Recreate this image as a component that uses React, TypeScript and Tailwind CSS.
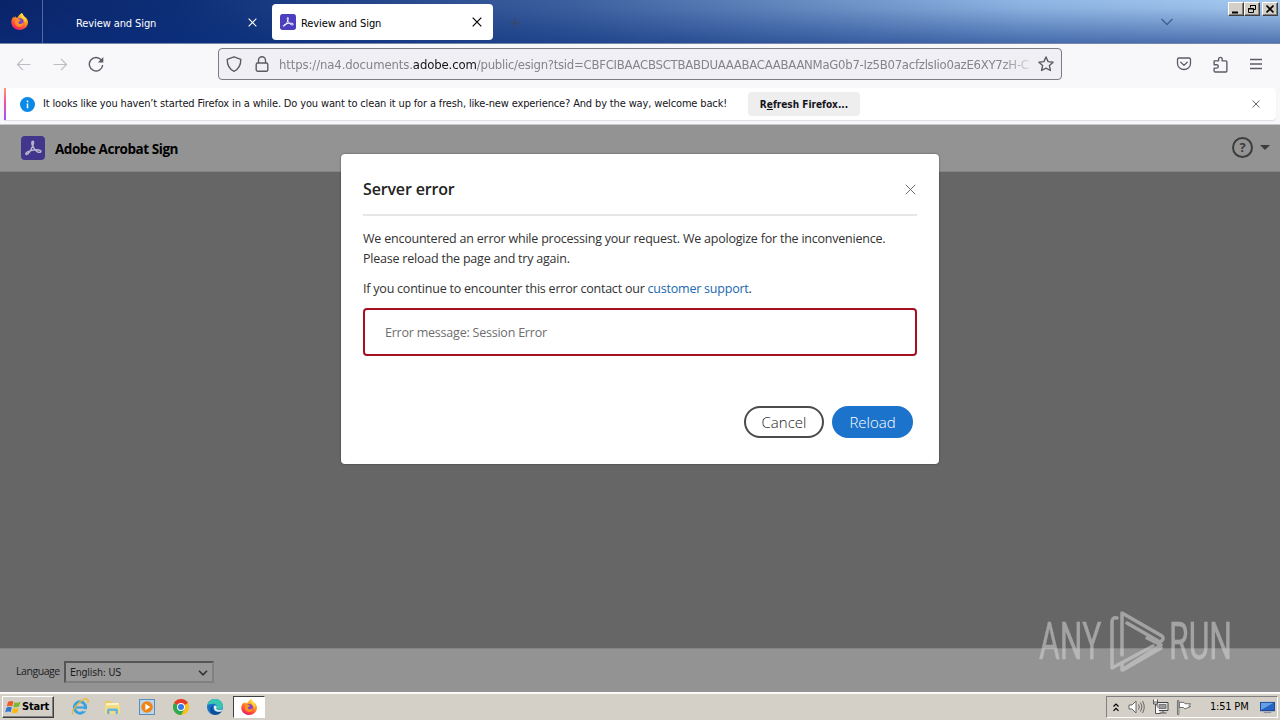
import React from "react";

const ui = "font-['DejaVu_Sans_Condensed','DejaVu_Sans',sans-serif] [font-stretch:condensed]";
const clean = "font-['Open_Sans','Noto_Sans',sans-serif]";

function Firefox({ className = "" }: { className?: string }) {
  return (
    <svg viewBox="0 0 16 16" className={className}>
      <defs>
        <linearGradient id="fxBody" x1="0.8" y1="0" x2="0.3" y2="1">
          <stop offset="0" stopColor="#ffe23c" />
          <stop offset=".4" stopColor="#ff9a1f" />
          <stop offset=".75" stopColor="#ff4a3d" />
          <stop offset="1" stopColor="#e61f6c" />
        </linearGradient>
      </defs>
      <path d="M10 0c1.2 1 1.5 2 1.9 2.8C14.500 4 16 6.300 16 8.800 16 12.800 12.500 16 8.200 16S.3 12.900.3 8.700C.3 6.600 1.200 4.800 2.300 3.400l.4 1.300L4.200 3l.5 1.500L6.500 4C7.500 1.500 9 1 10 0z" fill="url(#fxBody)" />
      <circle cx="8.300" cy="8.400" r="3.500" fill="#7a45c8" />
      <path d="M5 4.800c1 .2 1.900.6 2.600 1.200.8.200 1.500.5 1.500.8 0 .7-1.500.8-2 1.600-.5 1.200.6 2.100 2 1.900 1.300-.1 2-.9 2.200-1.600.8 2.400-1 4.300-3.200 4.300-2.700 0-4.500-2-4.300-4.400.1-1.500.6-2.400 1.200-3.800z" fill="#ff9026" />
      <path d="M10 0c1.200 1 1.500 2 1.900 2.800C14 5 14.600 7 13.700 9.500c-.2-2.400-1.500-3.700-3-4.800C9.600 3.600 9 2 10 0z" fill="#ffdc3d" />
    </svg>
  );
}

function Acrobat({ className = "", bg, fg }: { className?: string; bg: string; fg: string }) {
  return (
    <svg viewBox="0 0 24 24" className={className}>
      <rect width="24" height="24" rx="4" fill={bg} />
      <path
        d="M11.800 5.200c-1.300 0-1.200 2.400-.2 4.600 1 2.400 2.800 4.800 4.800 6 1.800 1 3.700.6 3.600-.6-.1-1.400-3.700-1.700-7-1.200-3.100.5-7.600 1.900-8.100 3.500-.3 1 .9 1.300 2 .3 1.800-1.500 3.600-4.700 4.700-7.600.8-2.300 1.500-5 .2-5z"
        fill="none"
        stroke={fg}
        strokeWidth="1.500"
        strokeLinejoin="round"
      />
    </svg>
  );
}

function Cross({ className = "", w = 1.2 }: { className?: string; w?: number }) {
  return (
    <svg viewBox="0 0 10 10" className={className} fill="none" stroke="currentColor" strokeWidth={w}>
      <path d="M.7.7l8.600 8.600M9.300.7L.7 9.300" />
    </svg>
  );
}

function WinButton({ children }: { children: React.ReactNode }) {
  return (
    <div className="flex h-[14px] w-4 items-center justify-center border border-t-white border-r-[#404040] border-b-[#404040] border-l-white bg-[#d4d0c8] shadow-[inset_-1px_-1px_0_#808080]">
      {children}
    </div>
  );
}

function TabStrip() {
  return (
    <div className="relative flex h-11 shrink-0 border-b border-[#7687a8] bg-[linear-gradient(to_bottom,transparent_0%,rgba(10,36,106,0.05)_20%,rgba(10,45,125,0.55)_100%),linear-gradient(to_right,#0a246a_0%,#0d2f78_14%,#3d619f_45%,#8fb6e4_80%,#a6caf0_100%)]">
      <div className="flex w-[43px] shrink-0 border-r border-[#52699f] pt-[13px] pl-[11px]">
        <Firefox className="h-[17px] w-[17px]" />
      </div>
      <div className={`flex w-[229px] items-center pt-px pl-[33px] pr-[15px] text-[11px] text-white ${ui}`}>
        <span className="flex-1 pt-[4px] whitespace-nowrap tracking-[-0.1px]">Review and Sign</span>
        <Cross className="h-[9px] w-[9px]" />
      </div>
      <div className={`mt-1 flex h-9 w-[221px] items-center rounded-[4px] bg-white pl-2 pr-[11px] text-[11px] text-black ${ui}`}>
        <Acrobat className="h-4 w-4" bg="#4b3fc0" fg="#fff" />
        <span className="ml-[5px] flex-1 pt-[4px] whitespace-nowrap tracking-[-0.1px]">Review and Sign</span>
        <Cross className="h-[10px] w-[10px]" w={1.2} />
      </div>
      <svg viewBox="0 0 10 10" className="mt-[18px] ml-[17px] h-[10px] w-[10px]" stroke="#3d4660" strokeWidth="1.2">
        <path d="M5 0v10M0 5h10" />
      </svg>
      <div className="flex-1" />
      <svg viewBox="0 0 12 7" className="mt-[18px] mr-[55px] h-[8px] w-[12px]" fill="none" stroke="#41618f" strokeWidth="1.3">
        <path d="M.5.5L6 6 11.500.5" />
      </svg>
      <div className="mt-[2px] mr-[2px] flex">
        <WinButton>
          <svg viewBox="0 0 10 10" className="h-[10px] w-[10px]"><path d="M1 7.500h6v2H1z" /></svg>
        </WinButton>
        <WinButton>
          <svg viewBox="0 0 10 10" className="h-[10px] w-[10px]" fill="none" stroke="#000">
            <path d="M3.500 3.500v-2h5v4h-2M3 1.500h6M1.500 4.500h5v4h-5zM1 5h6" />
          </svg>
        </WinButton>
        <div className="ml-[2px]">
          <WinButton>
            <Cross className="h-2 w-2 text-black" w={2} />
          </WinButton>
        </div>
      </div>
    </div>
  );
}

function Toolbar() {
  return (
    <div className="flex h-11 shrink-0 items-center bg-[#f8f8fb] pb-1 text-[#5b5b66]">
      <svg viewBox="0 0 16 14" className="ml-4 h-[13px] w-[15px]" fill="none" stroke="#bcbcc2" strokeWidth="1.3">
        <path d="M15.500 7H1.500M7.500 1l-6 6 6 6" />
      </svg>
      <svg viewBox="0 0 16 14" className="ml-[22px] h-[13px] w-[15px]" fill="none" stroke="#bcbcc2" strokeWidth="1.3">
        <path d="M.5 7h14M8.500 1l6 6-6 6" />
      </svg>
      <svg viewBox="0 0 16 16" className="ml-5 h-4 w-4" fill="none" stroke="currentColor" strokeWidth="1.4">
        <path d="M13.600 4.500A6.700 6.700 0 1 0 14.700 9" />
        <path d="M15.300 1v5.500H9.800z" fill="currentColor" stroke="none" />
      </svg>
      <div className="ml-[114px] flex h-8 w-[844px] items-center rounded-[4px] border border-[#7c7c85] bg-[#f0f0f4]">
        <svg viewBox="0 0 16 16" className="ml-[7px] h-4 w-4 shrink-0" fill="none" stroke="currentColor" strokeWidth="1.400" strokeLinejoin="round">
          <path d="M8 .8l6.800 2.500C14.800 8.800 13.500 13 8 15.300 2.500 13 1.200 8.800 1.200 3.300z" />
        </svg>
        <svg viewBox="0 0 14 16" className="ml-[13px] h-4 w-[14px] shrink-0" fill="none" stroke="currentColor" strokeWidth="1.400">
          <rect x="1.200" y="7" width="11.600" height="8.200" rx="1.500" />
          <path d="M3.500 7V4.200a3.500 3.500 0 0 1 7 0V7" />
        </svg>
        <div className={`mt-[2px] ml-[10px] w-[752px] text-[13px] leading-5 whitespace-nowrap text-[#83838b] [mask-image:linear-gradient(to_right,#000_96%,rgba(0,0,0,0.2)_100%)] ${ui}`}>
          <span className="tracking-[-0.12px]">https://na4.documents.</span>
          <span className="tracking-[-0.12px] text-[#15141a]">adobe.com</span>
          <span className="tracking-[-0.27px]">/public/esign?tsid=CBFCIBAACBSCTBABDUAAABACAABAANMaG0b7-Iz5B07acfzlsIio0azE6XY7zH-C</span>
        </div>
        <svg viewBox="0 0 16 16" className="ml-[7px] h-4 w-4 shrink-0" fill="none" stroke="currentColor" strokeWidth="1.400" strokeLinejoin="round">
          <path d="M8 1l2.100 4.600 5 .6-3.700 3.400 1 4.900L8 12.100l-4.400 2.400 1-4.900L.9 6.200l5-.6z" />
        </svg>
      </div>
      <svg viewBox="0 0 16 16" className="ml-[114px] h-4 w-4" fill="none" stroke="currentColor" strokeWidth="1.300" strokeLinecap="round" strokeLinejoin="round">
        <path d="M3 2h10a1.500 1.500 0 0 1 1.500 1.500V7.500a6.500 6 0 0 1-13 0V3.500A1.500 1.500 0 0 1 3 2z" />
        <path d="M4.800 6.300L8 9.400l3.200-3.100" />
      </svg>
      <svg viewBox="0 0 16 16" className="ml-5 h-[17px] w-[17px]" fill="none" stroke="currentColor" strokeWidth="1.300" strokeLinejoin="round">
        <path d="M2 4.600h4.200V3a1.700 1.700 0 0 1 3.400 0v1.600H13a1 1 0 0 1 1 1V14a1 1 0 0 1-1 1H3a1 1 0 0 1-1-1v-2.600h2.300a1.600 1.600 0 0 0 0-3.200H2z" />
      </svg>
      <svg viewBox="0 0 12 12" className="ml-[21px] h-3 w-3" stroke="currentColor" strokeWidth="1.300">
        <path d="M0 1.500h12M0 6h12M0 10.500h12" />
      </svg>
    </div>
  );
}

function Notification() {
  return (
    <div className="h-[37px] shrink-0 border-b border-[#c9c9c9] bg-[#f8f8fb] pr-1 pl-1">
      <div className={`flex h-8 items-center rounded-r bg-white text-[11px] text-[#15141a] shadow-[0_1px_1px_#dddde2] ${ui}`}>
        <div className="h-full w-[2px] bg-[linear-gradient(to_bottom,#ff9a70,#f0529c_45%,#9059ff)]" />
        <svg viewBox="0 0 16 16" className="ml-[14px] h-[15px] w-[15px]">
          <circle cx="8" cy="8" r="8" fill="#0a8ae6" />
          <path d="M7.200 6.800h1.600V12H7.200zM7.200 3.800h1.600v1.700H7.200z" fill="#fff" />
        </svg>
        <span className="ml-2 w-[705px] whitespace-nowrap tracking-[-0.148px]">
          It looks like you haven’t started Firefox in a while. Do you want to clean it up for a fresh, like-new experience? And by the way, welcome back!
        </span>
        <div className="flex h-6 w-28 items-center justify-center rounded-[4px] bg-[#eeeeef] pt-px text-[10px] font-bold whitespace-nowrap">
          R<span className="underline">e</span>fresh Firefox...
        </div>
        <div className="flex-1" />
        <Cross className="mr-[16px] h-[8px] w-[8px] text-[#5b5b66]" w={1.200} />
      </div>
    </div>
  );
}

function ServerErrorDialog() {
  return (
    <div className={`absolute top-[29px] left-[341px] flex h-[310px] w-[598px] flex-col rounded-[4px] bg-white px-[22px] text-[12.5px] tracking-[-0.22px] text-[#323232] shadow-[0_0_2px_rgba(0,0,0,0.5)] ${clean}`}>
      <div className="flex h-[62px] items-center justify-between border-b-2 border-[#e6e6e6] pt-[10px]">
        <h1 className="text-[16px] leading-5 font-semibold tracking-[-0.16px] whitespace-nowrap text-[#222]">Server error</h1>
        <Cross className="mr-px h-[11px] w-[11px] text-[#6e6e6e]" w={0.9} />
      </div>
      <p className="mt-[13px] leading-5 whitespace-nowrap">
        We encountered an error while processing your request. We apologize for the inconvenience.
        <br />
        Please reload the page and try again.
      </p>
      <p className="mt-[10px] leading-5 whitespace-nowrap">
        If you continue to encounter this error contact our <span className="text-[#2068b0]">customer support</span>.
      </p>
      <div className="mt-[9px] flex h-12 items-center rounded-[4px] border-2 border-[#a6101e] pt-[2px] pl-5 text-[#6e6e6e]">
        Error message: Session Error
      </div>
      <div className="mt-[50px] mr-1 flex justify-end gap-2 text-[15px] font-light tracking-normal">
        <button className="h-8 w-20 rounded-full border-2 border-[#4b4b4b] text-[#222]">Cancel</button>
        <button className="h-8 w-[81px] rounded-full bg-[#1c73cb] text-white">Reload</button>
      </div>
    </div>
  );
}

function Watermark() {
  return (
    <svg viewBox="0 0 204 70" className="absolute top-[480px] left-[1035px] h-[70px] w-[204px] opacity-55" fill="none" stroke="#d6d6d6" strokeWidth="3.500" strokeLinecap="round" strokeLinejoin="round">
      <g fill="#d6d6d6" stroke="#d6d6d6" strokeWidth=".5" fontFamily="Roboto, sans-serif" fontSize="52" fontWeight="400">
        <text transform="translate(4 54) scale(.6 1)" textLength="104" lengthAdjust="spacingAndGlyphs">ANY</text>
        <text transform="translate(134 54) scale(.6 1)" textLength="105" lengthAdjust="spacingAndGlyphs">RUN</text>
      </g>
      <path d="M82 13q-5-1-5 4v46l41-22" />
      <path d="M87 50V8l40 23q3 3-2 6L92 18" />
      <path d="M87 58v7l39-25-14-7M88 65l38-22" />
    </svg>
  );
}

function Page() {
  return (
    <main className="relative flex flex-1 flex-col bg-[#666]">
      <header className={`flex h-[47px] shrink-0 items-center border-b border-[#858585] bg-[#939393] pr-[10px] pb-px pl-[21px] ${clean}`}>
        <Acrobat className="h-6 w-6" bg="#41368c" fg="#b9b5cd" />
        <span className="mt-[4px] ml-[10px] flex-1 text-[13.5px] font-bold tracking-[-0.45px] whitespace-nowrap text-black">Adobe Acrobat Sign</span>
        <div className="flex h-[21px] w-[21px] items-center justify-center rounded-full border-2 border-[#3c3c3c] text-[13px] font-bold text-[#3c3c3c]">?</div>
        <svg viewBox="0 0 10 5" className="ml-[7px] h-[5px] w-[10px]"><path d="M0 0h10L5 5z" fill="#3c3c3c" /></svg>
      </header>
      <div className="flex-1" />
      <footer className={`flex h-[44px] shrink-0 items-center border-t border-[#858585] bg-[#939393] pt-[3px] pl-4 text-[10.5px] text-[#1d1d1d] ${clean}`}>
        <span className="w-12 whitespace-nowrap tracking-[-0.45px]">Language</span>
        <div className={`flex h-[22px] w-[150px] items-center justify-between border-2 border-t-[#555] border-r-[#808080] border-b-[#808080] border-l-[#555] bg-[#999] pt-px pr-1 pl-1 text-[10.5px] tracking-[-0.2px] ${ui}`}>
          English: US
          <svg viewBox="0 0 10 6" className="h-[6px] w-[10px]" fill="none" stroke="#333" strokeWidth="1.600"><path d="M1 .8l4 4 4-4" /></svg>
        </div>
      </footer>
      <ServerErrorDialog />
      <Watermark />
    </main>
  );
}

function Taskbar() {
  return (
    <div className={`flex h-7 shrink-0 items-center border-t-2 border-[#fbfaf8] bg-[#d4d0c8] pl-[2px] text-[11px] text-black ${ui}`}>
      <div className="flex h-[22px] w-[52px] items-center border border-t-white border-r-[#404040] border-b-[#404040] border-l-white pl-[2px] text-[11px] font-bold tracking-[-0.2px] shadow-[inset_-1px_-1px_0_#808080]">
        <svg viewBox="0 0 16 14" className="mr-px h-[14px] w-[16px]">
          <path d="M3 2q3-2 5.500-.3L7.200 6.300Q4.500 5 1.800 6.500z" fill="#ef5b22" />
          <path d="M9.500 2.200Q12 3.500 15.500 1.800L14 6.500q-3 1.500-5.700.2z" fill="#7db72f" />
          <path d="M1.500 7.700q2.800-1.500 5.400-.3L5.600 12Q3 10.700.2 12.300z" fill="#2f77cf" />
          <path d="M8 8q3 1.300 5.700 0l-1.300 4.600q-3 1.400-5.600 0z" fill="#fcb813" />
        </svg>
        Start
      </div>
      <svg viewBox="0 0 18 18" className="ml-[17px] h-[18px] w-[18px]" fill="none">
        <circle cx="9" cy="9.500" r="5.700" stroke="#3aa2e0" strokeWidth="3" />
        <path d="M4 9.500h11" stroke="#3aa2e0" strokeWidth="2.200" />
        <path d="M12 11.300h5v2h-5z" fill="#d4d0c8" />
        <path d="M2 16.500C-1 13 12-1.500 16.500 1.500c1 .8.600 2.500 0 3.500" stroke="#eab836" strokeWidth="1.300" />
      </svg>
      <svg viewBox="0 0 17 16" className="ml-[15px] h-[16px] w-[17px]">
        <path d="M1 2h6l1 2h8v11H1z" fill="#ecc969" />
        <path d="M2 4h13v8H2z" fill="#fff3bf" />
        <path d="M1 6h15v9H1z" fill="#f3dc86" />
        <path d="M3 15v-4q0-1.500 1.500-1.500h8q1.500 0 1.500 1.500v4h-2.500v-3h-6v3z" fill="#69b5dc" />
      </svg>
      <svg viewBox="0 0 16 16" className="ml-[18px] h-4 w-4">
        <rect x=".5" y=".5" width="15" height="15" fill="#b8d6ee" stroke="#5c8db8" />
        <circle cx="8" cy="8" r="5.800" fill="#f08418" />
        <path d="M6.300 4.800L11.300 8l-5 3.200z" fill="#fff" />
      </svg>
      <svg viewBox="0 0 16 16" className="ml-[18px] h-4 w-4">
        <circle cx="8" cy="8" r="8" fill="#fbc116" />
        <path d="M8 8L1.070 4A8 8 0 0 1 14.930 4z" fill="#e33b2e" />
        <path d="M8 8L1.070 4A8 8 0 0 0 8 16l3.500-6z" fill="#2da94f" />
        <circle cx="8" cy="8" r="4" fill="#fff" />
        <circle cx="8" cy="8" r="3" fill="#3b78e7" />
      </svg>
      <svg viewBox="0 0 16 16" className="ml-[18px] h-4 w-4">
        <circle cx="8" cy="8" r="8" fill="#1673c9" />
        <path d="M.3 6.500C1.500 2 5 0 8 0c5 0 8 3.500 8 6.800 0 2.700-2 4-4.200 4-1.800 0-2.700-.7-2-1.700C10.800 7 9 4.800 6.200 4.800 3.500 4.800 1.200 5.500.3 6.500z" fill="#38c6b0" />
        <path d="M6 6.500c-2 4 1.500 7.500 8.500 6-2 3-6 4.300-9 2.500C2 13 2.500 8 6 6.500z" fill="#0d4d94" />
        <path d="M7 7q2-1 2.700.5c.3 1-1.200 2 .6 3.200 1.700 1 4.200.3 5.200-.7l-1 2.200C10 14 6 11.500 7 7z" fill="#e3edf2" />
      </svg>
      <div className="ml-[10px] flex h-[22px] w-8 items-center justify-center border border-t-[#404040] border-r-white border-b-white border-l-[#404040] bg-white">
        <Firefox className="h-4 w-4" />
      </div>
      <div className="flex-1" />
      <div className="mr-[2px] flex h-[22px] w-[172px] items-center border border-t-[#808080] border-r-white border-b-white border-l-[#808080] pl-[6px]">
        <svg viewBox="0 0 6 9" className="h-[9px] w-[6px]" fill="none" stroke="#000" strokeWidth="1.200"><path d="M.5 3.500L3 1l2.500 2.500M.5 7.800L3 5.300l2.500 2.500" /></svg>
        <svg viewBox="0 0 17 14" className="ml-[9px] h-[14px] w-[17px]" fill="none" stroke="#666">
          <path d="M1 5h3l4-4v12L4 9H1z" fill="#fff" />
          <path d="M10.500 4.500q1.800 2.500 0 5M12.500 2.500q3 4.500 0 9M14.500 1q3.500 6 0 12" />
        </svg>
        <svg viewBox="0 0 16 16" className="ml-[7px] h-[16px] w-[17px]" fill="none" stroke="#555">
          <path d="M4.500 3.500h11v8h-11z" fill="#eee" stroke="#444" />
          <path d="M6.500 5.500h7v4h-7z" fill="#999" stroke="#777" />
          <path d="M1 .5v2.500h4V.5M1 3v2h4V3M3 5v9.500h5M7 14h7M10.500 12v2" fill="#fff" />
        </svg>
        <svg viewBox="0 0 17 16" className="ml-[7px] h-[15px] w-[16px]" stroke="#666" fill="#fff">
          <path d="M1.500.5h1.500v15H1.500zM3.500 2.500h5l1 1.500h6l-2 2.500 2 .5-6 2.500-1.500-1.500H3.500z" />
        </svg>
        <span className="ml-[18px] w-[50px] pt-px whitespace-nowrap tracking-[-0.2px]">1:51 PM</span>
        <svg viewBox="0 0 16 14" className="h-[13px] w-[15px]">
          <path d="M0 1h16v10H0z" fill="#173f8e" /><path d="M1 2h14L1 10z" fill="#62a0ea" /><path d="M1 10L15 2v8z" fill="#2864c4" /><path d="M4 12h8v1H4z" fill="#7c8798" />
        </svg>
      </div>
    </div>
  );
}

export default function App() {
  return (
    <div className="flex h-[720px] w-[1280px] flex-col overflow-hidden">
      <TabStrip />
      <Toolbar />
      <Notification />
      <Page />
      <Taskbar />
    </div>
  );
}
